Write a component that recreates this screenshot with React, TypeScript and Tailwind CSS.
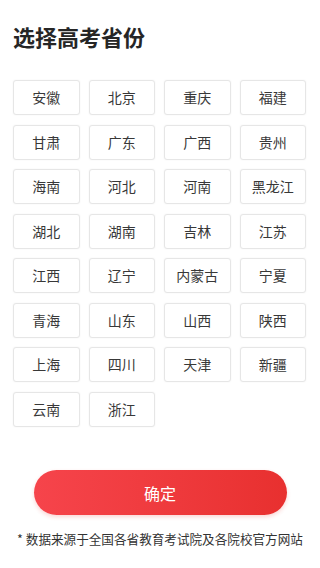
const provinces = [
  "安徽", "北京", "重庆", "福建",
  "甘肃", "广东", "广西", "贵州",
  "海南", "河北", "河南", "黑龙江",
  "湖北", "湖南", "吉林", "江苏",
  "江西", "辽宁", "内蒙古", "宁夏",
  "青海", "山东", "山西", "陕西",
  "上海", "四川", "天津", "新疆",
  "云南", "浙江",
];

const font = { fontFamily: '"Noto Sans CJK SC", "Noto Sans", sans-serif' };

export default function App() {
  return (
    <div className="flex h-[568px] w-[320px] flex-col bg-white" style={font}>
      <h1 className="pl-[13px] pt-[22px] text-[22px] font-semibold leading-[28px] text-[#262626]">
        选择高考省份
      </h1>

      <div className="mt-[30px] grid grid-cols-4 gap-x-[9px] gap-y-[9.5px] pl-[13px] pr-[14px]">
        {provinces.map((p) => (
          <button
            key={p}
            className="flex h-[35px] items-center justify-center rounded-[3px] border border-[#e6e6e6] bg-white text-[14px] text-[#383838] shadow-[0_0_2px_rgba(0,0,0,0.06)]"
          >
            {p}
          </button>
        ))}
      </div>

      <div className="mt-auto flex flex-col items-center pb-[20px]">
        <button className="flex h-[45px] w-[253px] items-center justify-center rounded-full bg-gradient-to-r from-[#f6444b] to-[#e8302f] text-[16px] text-white shadow-[0_2px_4px_rgba(232,48,47,0.2)]">
          确定
        </button>
        <p className="mt-[15px] text-[12.6px] leading-[18px] text-[#333]">
          * 数据来源于全国各省教育考试院及各院校官方网站
        </p>
      </div>
    </div>
  );
}
